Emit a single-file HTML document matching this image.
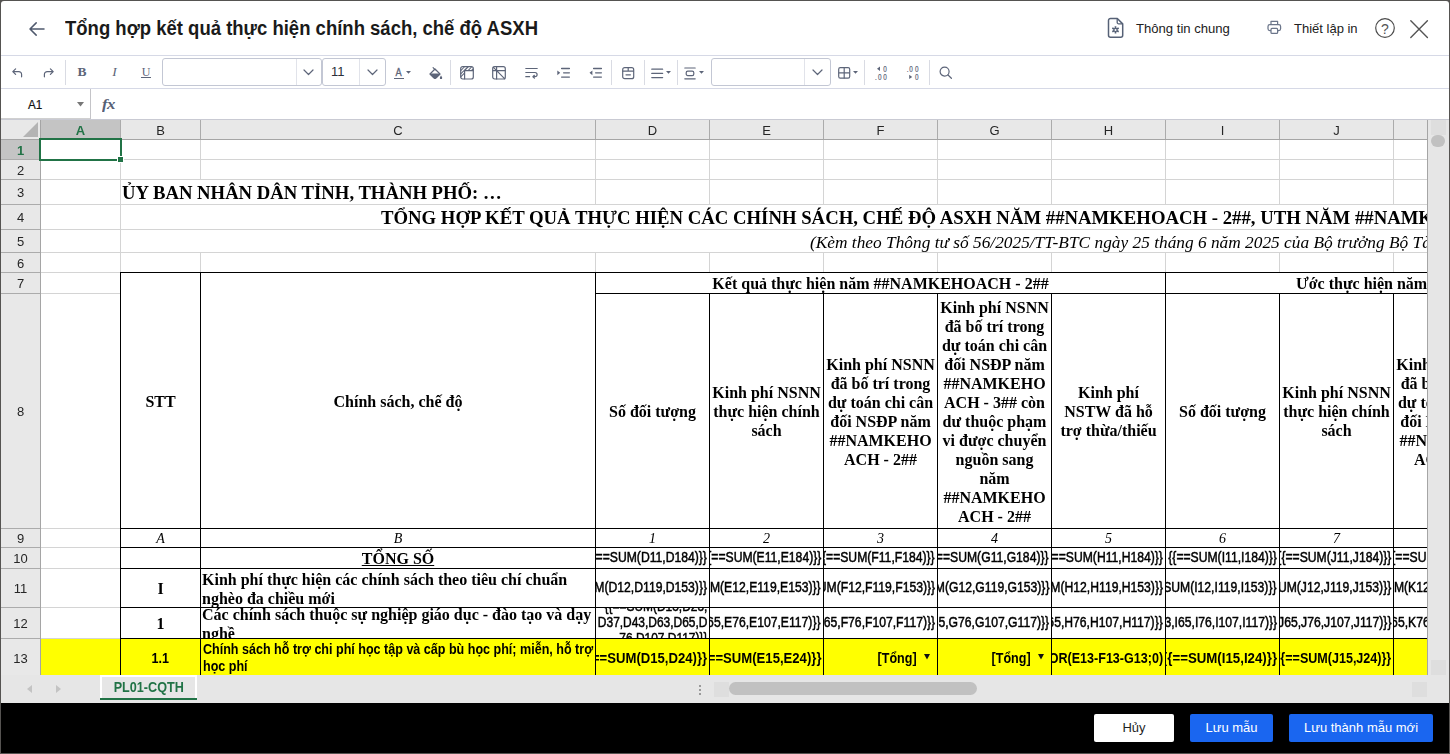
<!DOCTYPE html>
<html lang="vi"><head><meta charset="utf-8"><title>Tổng hợp kết quả thực hiện chính sách, chế độ ASXH</title>
<style>
*{box-sizing:border-box;margin:0;padding:0}
html,body{width:1450px;height:754px;overflow:hidden;background:#000}
body{position:relative;font-family:"Liberation Sans",sans-serif;color:#000}
.abs{position:absolute}
#frame{position:absolute;left:0;top:0;width:1450px;height:754px;background:#555351}
#win{position:absolute;left:1px;top:1px;width:1448px;height:702px;background:#fff;border-radius:3px 3px 0 0;overflow:hidden}
#foot{position:absolute;left:1px;top:703px;width:1448px;height:50px;background:#000}
.hl{position:absolute;height:1px;background:#d4d4d4}
.vl{position:absolute;width:1px;background:#d4d4d4}
.bh{position:absolute;height:1px;background:#000}
.bv{position:absolute;width:1px;background:#000}
.c{position:absolute;overflow:hidden;display:flex;white-space:nowrap}
.ser{font-family:"Liberation Serif",serif}
.b{font-weight:bold}
.i{font-style:italic}
.rh{position:absolute;left:1px;width:39px;text-align:center;font-size:13px;color:#262626;display:flex;align-items:center;justify-content:center;padding-top:1px;padding-right:2px}
.ch{position:absolute;top:0;height:19px;text-align:center;font-size:13px;color:#262626;display:flex;align-items:center;justify-content:center;padding-top:2px}
.hd{font-weight:bold;font-size:16px;line-height:19px;text-align:center;white-space:normal;align-items:center;justify-content:center;font-family:"Liberation Serif",serif}
.hd span{display:block}
.f{justify-content:flex-end;align-items:center;font-size:14.67px}
.f span{display:block;-webkit-text-stroke:.5px #000;transform:scaleX(.83);transform-origin:100% 50%;white-space:nowrap}
.y{justify-content:flex-end;align-items:center;font-size:14.67px;font-weight:bold}
.y span{display:block;transform:scaleX(.856);transform-origin:100% 50%;white-space:nowrap}
.btn{position:absolute;top:714px;height:28px;border-radius:2px;font-size:13px;display:flex;align-items:center;justify-content:center}
.btn span{display:block;white-space:nowrap;position:relative;top:-1px}
.tsep{position:absolute;top:59px;width:1px;height:25px;background:#d9dbe3}
.box{position:absolute;top:58px;height:28px;border:1px solid #c3c7d4;border-radius:3px;background:#fff}
.ic{position:absolute;overflow:visible}
</style></head><body>
<div id="frame"></div><div id="win">
<div class="abs" style="left:-1px;top:54px;width:1450px;height:1px;background:#d6d9e6"></div>
<svg class="ic" style="left:27px;top:19px" width="18" height="18" viewBox="0 0 18 18" fill="none" stroke="#4f596d" stroke-width="1.5" stroke-linecap="round" stroke-linejoin="round"><path d="M16 9H2.2M8.2 2.9L2 9l6.2 6.1"/></svg>
<div class="abs b" style="left:64.4px;top:14px;font-size:20px;line-height:26px;white-space:nowrap;color:#1a1a1a;transform:scaleX(.925);transform-origin:0 50%">Tổng hợp kết quả thực hiện chính sách, chế độ ASXH</div>
<svg class="ic" style="left:1105.9px;top:16.3px" width="17" height="21" viewBox="0 0 17 21" fill="none" stroke="#566176" stroke-width="1.5" stroke-linejoin="round" stroke-linecap="round"><path d="M3.5 1.5h6.8l5.4 5.4v11.4a2 2 0 0 1-2 2H3.5a2 2 0 0 1-2-2V3.5a2 2 0 0 1 2-2z"/><path d="M10.2 1.8v3.6a1.4 1.4 0 0 0 1.4 1.4h3.8" stroke-width="1.3"/><g stroke-width="1.7" stroke-linecap="butt"><path d="M8.5 9.2v7.4M5.3 11.05l6.4 3.7M11.7 11.05l-6.4 3.7"/></g><circle cx="8.5" cy="12.9" r="1.9" fill="#566176" stroke="none"/><circle cx="8.5" cy="12.9" r="1" fill="#fff" stroke="none"/></svg>
<div class="abs" style="left:1135px;top:18.5px;font-size:13.1px;line-height:18px;white-space:nowrap;color:#212121">Thông tin chung</div>
<svg class="ic" style="left:1265.8px;top:18.8px" width="15" height="15" viewBox="0 0 15 15" fill="none" stroke="#6b758a" stroke-width="1.25" stroke-linejoin="round"><path d="M4 4.6V1.4h6.6v3.2"/><rect x="1" y="4.6" width="12.6" height="6" rx="1.8"/><rect x="4" y="8.4" width="6.6" height="5" rx="1" fill="#fff"/></svg>
<div class="abs" style="left:1293px;top:18.5px;font-size:13px;line-height:18px;white-space:nowrap;color:#212121">Thiết lập in</div>
<svg class="ic" style="left:1373px;top:16px" width="22" height="22" viewBox="0 0 22 22" fill="none" stroke="#4c4c4c" stroke-width="1.2"><circle cx="11" cy="11" r="9.3"/></svg>
<div class="abs" style="left:1373px;top:16.5px;width:22px;height:22px;font-size:14px;line-height:22px;text-align:center;color:#555">?</div>
<svg class="ic" style="left:1409px;top:19px" width="18" height="18" viewBox="0 0 18 18" fill="none" stroke="#555" stroke-width="1.4" stroke-linecap="round"><path d="M0.8 0.8l16.6 16.6M17.4 0.8L0.8 17.4"/></svg>
<div class="abs" style="left:-1px;top:87px;width:1450px;height:1px;background:#d6d9e6"></div>
<svg class="ic" style="left:10.5px;top:66.5px" width="11" height="10" viewBox="0 0 11 10" fill="none" stroke="#5d6579" stroke-width="1.2" stroke-linecap="round" stroke-linejoin="round" ><path d="M3.6 0.8L0.8 3.6l2.8 2.8M1.2 3.6h5.6a2.8 2.8 0 0 1 2.8 2.8v2.4"/></svg>
<svg class="ic" style="left:42px;top:66.5px" width="11" height="10" viewBox="0 0 11 10" fill="none" stroke="#5d6579" stroke-width="1.2" stroke-linecap="round" stroke-linejoin="round" ><path d="M7.4 0.8l2.8 2.8-2.8 2.8M9.8 3.6H4.2a2.8 2.8 0 0 0-2.8 2.8v2.4"/></svg>
<div class="tsep" style="left:64px"></div>
<div class="abs ser b" style="left:73px;top:63px;width:16px;text-align:center;font-size:13.5px;line-height:16px;color:#5d6579">B</div>
<div class="abs ser i" style="left:105.5px;top:63px;width:16px;text-align:center;font-size:13.5px;line-height:16px;color:#5d6579">I</div>
<div class="abs ser" style="left:137px;top:63.5px;width:16px;text-align:center;font-size:12px;line-height:14px;color:#5d6579">U</div>
<div class="abs" style="left:140px;top:76px;width:10px;height:1px;background:#5d6579"></div>
<div class="box" style="left:161px;top:57px;width:160px;height:28px;"></div>
<div class="abs" style="left:295px;top:58px;width:1px;height:26px;background:#e1e3ea"></div>
<svg class="ic" style="left:302px;top:68px" width="11" height="7" viewBox="0 0 11 7" fill="none" stroke="#5d6579" stroke-width="1.2" stroke-linecap="round" stroke-linejoin="round" stroke-width="1.4"><path d="M1 1l4.5 4.5L10 1"/></svg>
<div class="box" style="left:321px;top:57px;width:64px;height:28px;"></div>
<div class="abs" style="left:358px;top:58px;width:1px;height:26px;background:#e1e3ea"></div>
<svg class="ic" style="left:366px;top:68px" width="11" height="7" viewBox="0 0 11 7" fill="none" stroke="#5d6579" stroke-width="1.2" stroke-linecap="round" stroke-linejoin="round" stroke-width="1.4"><path d="M1 1l4.5 4.5L10 1"/></svg>
<div class="abs" style="left:330px;top:62px;font-size:13px;line-height:18px;color:#2b2f3a">11</div>
<div class="abs" style="left:391.5px;top:64.5px;width:13px;text-align:center;font-size:10.5px;line-height:12px;color:#5d6579;-webkit-text-stroke:.3px #5d6579"><span style="display:inline-block;transform:scaleX(.88)">A</span></div>
<div class="abs" style="left:393px;top:76.5px;width:10px;height:1px;background:#5d6579"></div>
<svg class="ic" style="left:404.5px;top:70px" width="5" height="3" viewBox="0 0 5 3"><path d="M0 0h5L2.5 2.8z" fill="#5d6579"/></svg>
<svg class="ic" style="left:427.5px;top:65.5px" width="14" height="13" viewBox="0 0 14 13" fill="none" stroke="#5d6579" stroke-width="1.2" stroke-linecap="round" stroke-linejoin="round" ><path d="M1 7L6 2l5 5-3.9 3.9a1.5 1.5 0 0 1-2.2 0z"/><path d="M1.4 7h9.2l-3.5 3.7a1.5 1.5 0 0 1-2.2 0z" fill="#5d6579"/><path d="M4.1 0.7l2.1 2.1"/><path d="M12 8.4c.8 1.1 1.2 1.9 1.2 2.5a1.2 1.2 0 0 1-2.4 0c0-.6.4-1.4 1.2-2.5z" fill="#5d6579" stroke="none"/></svg>
<div class="tsep" style="left:449px"></div>
<svg class="ic" style="left:459px;top:65px" width="14" height="14" viewBox="0 0 14 14" fill="none" stroke="#5d6579" stroke-width="1.2" stroke-linecap="round" stroke-linejoin="round" ><rect x="0.7" y="0.7" width="12.6" height="12.3" rx="2"/><path d="M4.6 4.6v8.2M4.6 4.6h8.4"/><path d="M1 4.3L4.3 1M1 7.6L7.6 1M4.8 4.4L8.2 1M8.3 4.4L11.5 1M1 10.6l3.4-3.4M11.6 4.4l1.4-1.4" stroke-width="1.05"/></svg>
<svg class="ic" style="left:491px;top:65px" width="14" height="14" viewBox="0 0 14 14" fill="none" stroke="#5d6579" stroke-width="1.2" stroke-linecap="round" stroke-linejoin="round" ><rect x="0.7" y="0.7" width="12.6" height="12.3" rx="2"/><path d="M4.6 1v12M1 4.6h12M1.2 1.2l11.6 11.6"/></svg>
<svg class="ic" style="left:523.5px;top:66px" width="14" height="12" viewBox="0 0 14 12" fill="none" stroke="#5d6579" stroke-width="1.2" stroke-linecap="round" stroke-linejoin="round" ><path d="M0.8 1.5h11.4M0.8 5.5h9.2a2.1 2.1 0 0 1 0 4.2H8.2M0.8 9.7h3.8M9.4 8.3L7.9 9.7l1.5 1.4"/></svg>
<svg class="ic" style="left:555.5px;top:66px" width="14" height="12" viewBox="0 0 14 12" fill="none" stroke="#5d6579" stroke-width="1.2" stroke-linecap="round" stroke-linejoin="round" ><path d="M4.6 1.5h7.8M6.6 5.8h5.8M4.6 10.1h7.8" stroke-width="1.3"/><path d="M0.3 3.4L3.2 5.8 0.3 8.2z" fill="#5d6579" stroke="none"/></svg>
<svg class="ic" style="left:587.5px;top:66px" width="14" height="12" viewBox="0 0 14 12" fill="none" stroke="#5d6579" stroke-width="1.2" stroke-linecap="round" stroke-linejoin="round" ><path d="M4.6 1.5h7.8M6.6 5.8h5.8M4.6 10.1h7.8" stroke-width="1.3"/><path d="M3.4 3.4L0.5 5.8 3.4 8.2z" fill="#5d6579" stroke="none"/></svg>
<div class="tsep" style="left:610px"></div>
<svg class="ic" style="left:621px;top:66px" width="13" height="13" viewBox="0 0 13 13" fill="none" stroke="#5d6579" stroke-width="1.2" stroke-linecap="round" stroke-linejoin="round" ><rect x="0.7" y="0.7" width="11" height="11" rx="2"/><path d="M1 4.2h10.4M6.2 1v3M4 7.8h4.4"/></svg>
<div class="tsep" style="left:643px"></div>
<svg class="ic" style="left:650px;top:66.5px" width="13" height="11" viewBox="0 0 13 11" fill="none" stroke="#5d6579" stroke-width="1.2" stroke-linecap="round" stroke-linejoin="round" ><path d="M0.8 1.2h10.8M0.8 5.4h10.8M0.8 9.6h10.8" stroke-width="1.3"/></svg>
<svg class="ic" style="left:664.5px;top:69.5px" width="5" height="3" viewBox="0 0 5 3"><path d="M0 0h5L2.5 2.8z" fill="#5d6579"/></svg>
<div class="tsep" style="left:676px"></div>
<svg class="ic" style="left:683px;top:65.5px" width="12" height="13" viewBox="0 0 12 13" fill="none" stroke="#5d6579" stroke-width="1.2" stroke-linecap="round" stroke-linejoin="round" ><path d="M0.8 1h10.4M0.8 11.8h10.4"/><rect x="2.2" y="4.2" width="7.6" height="4.4" rx="1.6"/></svg>
<svg class="ic" style="left:697.5px;top:69.5px" width="5" height="3" viewBox="0 0 5 3"><path d="M0 0h5L2.5 2.8z" fill="#5d6579"/></svg>
<div class="box" style="left:710px;top:57px;width:120px;height:28px;"></div>
<div class="abs" style="left:803px;top:58px;width:1px;height:26px;background:#e1e3ea"></div>
<svg class="ic" style="left:811px;top:68px" width="11" height="7" viewBox="0 0 11 7" fill="none" stroke="#5d6579" stroke-width="1.2" stroke-linecap="round" stroke-linejoin="round" stroke-width="1.4"><path d="M1 1l4.5 4.5L10 1"/></svg>
<svg class="ic" style="left:836.5px;top:66px" width="13" height="12" viewBox="0 0 13 12" fill="none" stroke="#5d6579" stroke-width="1.2" stroke-linecap="round" stroke-linejoin="round" ><rect x="0.7" y="0.7" width="11" height="10.4" rx="1.6"/><path d="M6.2 1v10M1 5.9h10.4"/></svg>
<svg class="ic" style="left:851.5px;top:69.5px" width="5" height="3" viewBox="0 0 5 3"><path d="M0 0h5L2.5 2.8z" fill="#5d6579"/></svg>
<div class="tsep" style="left:863px"></div>
<svg class="ic" style="left:873px;top:64px" width="15" height="16" viewBox="0 0 15 16"><path d="M6 1.6v4.4L3 3.8z" fill="#5d6579"/><text transform="translate(9.2 6.9) scale(.76 1)" font-family="Liberation Sans, sans-serif" font-size="8.4" fill="#5d6579" stroke="#5d6579" stroke-width=".2">0</text><text transform="translate(1 14.8) scale(.76 1)" font-family="Liberation Sans, sans-serif" font-size="8.4" fill="#5d6579" stroke="#5d6579" stroke-width=".2">.</text><text transform="translate(4.1 14.8) scale(.76 1)" font-family="Liberation Sans, sans-serif" font-size="8.4" fill="#5d6579" stroke="#5d6579" stroke-width=".2">0</text><text transform="translate(9.2 14.8) scale(.76 1)" font-family="Liberation Sans, sans-serif" font-size="8.4" fill="#5d6579" stroke="#5d6579" stroke-width=".2">0</text></svg>
<svg class="ic" style="left:905px;top:64px" width="15" height="16" viewBox="0 0 15 16"><text transform="translate(0.8 6.9) scale(.76 1)" font-family="Liberation Sans, sans-serif" font-size="8.4" fill="#5d6579" stroke="#5d6579" stroke-width=".2">.</text><text transform="translate(3.3 6.9) scale(.76 1)" font-family="Liberation Sans, sans-serif" font-size="8.4" fill="#5d6579" stroke="#5d6579" stroke-width=".2">0</text><text transform="translate(9.1 6.9) scale(.76 1)" font-family="Liberation Sans, sans-serif" font-size="8.4" fill="#5d6579" stroke="#5d6579" stroke-width=".2">0</text><path d="M3.2 9.7v4.4L6.2 11.9z" fill="#5d6579"/><text transform="translate(9.1 14.8) scale(.76 1)" font-family="Liberation Sans, sans-serif" font-size="8.4" fill="#5d6579" stroke="#5d6579" stroke-width=".2">0</text></svg>
<div class="tsep" style="left:928px"></div>
<svg class="ic" style="left:938px;top:65px" width="14" height="13" viewBox="0 0 14 13" fill="none" stroke="#5d6579" stroke-width="1.2" stroke-linecap="round" stroke-linejoin="round" ><circle cx="5.6" cy="5.6" r="4.5"/><path d="M9 9l3.4 3.3"/></svg>
<div class="abs" style="left:89px;top:88px;width:1px;height:30px;background:#c4c4c8"></div>
<div class="abs" style="left:-1px;top:117px;width:90px;height:1px;background:#d0d0d0"></div>
<div class="abs" style="left:27px;top:95px;font-size:13px;line-height:18px;color:#111;transform:scaleX(.9);transform-origin:0 50%;-webkit-text-stroke:.2px #111">A1</div>
<svg class="ic" style="left:76px;top:101px" width="7" height="5" viewBox="0 0 7 5"><path d="M0 0h7L3.5 4.6z" fill="#777"/></svg>
<div class="abs ser i" style="left:101px;top:92.8px;font-size:15px;line-height:20px;color:#566075;letter-spacing:-.5px;font-weight:bold;transform:scaleX(1.12);transform-origin:0 50%">fx</div>
<div class="abs" style="left:-1px;top:118px;width:1450px;height:1px;background:#c9cad3"></div>
<div class="abs" id="grid" style="will-change:transform;left:0px;top:119px;width:1427px;height:555px;overflow:hidden;background:#fff">
<div class="abs" style="left:-1px;top:0px;width:1428px;height:20px;background:#e8e8e8"></div>
<div class="abs" style="left:-1px;top:19px;width:1428px;height:1px;background:#a5a5a5"></div>
<div class="abs" style="left:-1px;top:20px;width:41px;height:540px;background:#e8e8e8"></div>
<div class="abs" style="left:39px;top:0px;width:1px;height:560px;background:#a5a5a5"></div>
<div class="abs" style="left:40px;top:0px;width:80px;height:19px;background:#c4c4c4"></div>
<div class="abs" style="left:0px;top:20px;width:39px;height:20px;background:#c4c4c4"></div>
<svg class="ic" style="left:22px;top:2px" width="15" height="15" viewBox="0 0 15 15"><path d="M15 0v15H0z" fill="#b4b4b4"/></svg>
<div class="abs" style="left:119px;top:0px;width:1px;height:19px;background:#ababab"></div>
<div class="abs" style="left:199px;top:0px;width:1px;height:19px;background:#ababab"></div>
<div class="abs" style="left:594px;top:0px;width:1px;height:19px;background:#ababab"></div>
<div class="abs" style="left:708px;top:0px;width:1px;height:19px;background:#ababab"></div>
<div class="abs" style="left:822px;top:0px;width:1px;height:19px;background:#ababab"></div>
<div class="abs" style="left:936px;top:0px;width:1px;height:19px;background:#ababab"></div>
<div class="abs" style="left:1050px;top:0px;width:1px;height:19px;background:#ababab"></div>
<div class="abs" style="left:1164px;top:0px;width:1px;height:19px;background:#ababab"></div>
<div class="abs" style="left:1278px;top:0px;width:1px;height:19px;background:#ababab"></div>
<div class="abs" style="left:1392px;top:0px;width:1px;height:19px;background:#ababab"></div>
<div class="ch" style="left:40px;width:79px;color:#217346;font-weight:bold;">A</div>
<div class="ch" style="left:120px;width:79px;">B</div>
<div class="ch" style="left:200px;width:394px;">C</div>
<div class="ch" style="left:595px;width:113px;">D</div>
<div class="ch" style="left:709px;width:113px;">E</div>
<div class="ch" style="left:823px;width:113px;">F</div>
<div class="ch" style="left:937px;width:113px;">G</div>
<div class="ch" style="left:1051px;width:113px;">H</div>
<div class="ch" style="left:1165px;width:113px;">I</div>
<div class="ch" style="left:1279px;width:113px;">J</div>
<div class="ch" style="left:1393px;width:113px;">K</div>
<div class="abs" style="left:0px;top:39px;width:39px;height:1px;background:#ababab"></div>
<div class="rh" style="top:20px;height:19px;color:#217346;font-weight:bold;">1</div>
<div class="abs" style="left:0px;top:59px;width:39px;height:1px;background:#ababab"></div>
<div class="rh" style="top:40px;height:19px;">2</div>
<div class="abs" style="left:0px;top:84px;width:39px;height:1px;background:#ababab"></div>
<div class="rh" style="top:60px;height:24px;">3</div>
<div class="abs" style="left:0px;top:109px;width:39px;height:1px;background:#ababab"></div>
<div class="rh" style="top:85px;height:24px;">4</div>
<div class="abs" style="left:0px;top:132px;width:39px;height:1px;background:#ababab"></div>
<div class="rh" style="top:110px;height:22px;">5</div>
<div class="abs" style="left:0px;top:152px;width:39px;height:1px;background:#ababab"></div>
<div class="rh" style="top:133px;height:19px;">6</div>
<div class="abs" style="left:0px;top:173px;width:39px;height:1px;background:#ababab"></div>
<div class="rh" style="top:153px;height:20px;">7</div>
<div class="abs" style="left:0px;top:408px;width:39px;height:1px;background:#ababab"></div>
<div class="rh" style="top:174px;height:234px;">8</div>
<div class="abs" style="left:0px;top:427px;width:39px;height:1px;background:#ababab"></div>
<div class="rh" style="top:409px;height:18px;">9</div>
<div class="abs" style="left:0px;top:448px;width:39px;height:1px;background:#ababab"></div>
<div class="rh" style="top:428px;height:20px;">10</div>
<div class="abs" style="left:0px;top:487px;width:39px;height:1px;background:#ababab"></div>
<div class="rh" style="top:449px;height:38px;">11</div>
<div class="abs" style="left:0px;top:518px;width:39px;height:1px;background:#ababab"></div>
<div class="rh" style="top:488px;height:30px;">12</div>
<div class="abs" style="left:0px;top:556px;width:39px;height:1px;background:#ababab"></div>
<div class="rh" style="top:519px;height:37px;">13</div>
<div class="hl" style="left:40px;top:39px;width:1387px;height:1px;"></div>
<div class="hl" style="left:40px;top:59px;width:1387px;height:1px;"></div>
<div class="hl" style="left:40px;top:84px;width:1387px;height:1px;"></div>
<div class="hl" style="left:40px;top:109px;width:1387px;height:1px;"></div>
<div class="hl" style="left:40px;top:132px;width:1387px;height:1px;"></div>
<div class="hl" style="left:40px;top:152px;width:80px;height:1px;"></div>
<div class="hl" style="left:40px;top:173px;width:80px;height:1px;"></div>
<div class="hl" style="left:40px;top:408px;width:80px;height:1px;"></div>
<div class="hl" style="left:40px;top:427px;width:80px;height:1px;"></div>
<div class="hl" style="left:40px;top:448px;width:80px;height:1px;"></div>
<div class="hl" style="left:40px;top:487px;width:80px;height:1px;"></div>
<div class="hl" style="left:40px;top:518px;width:80px;height:1px;"></div>
<div class="vl" style="left:119px;top:20px;width:1px;height:133px;"></div>
<div class="vl" style="left:199px;top:20px;width:1px;height:40px;"></div>
<div class="vl" style="left:199px;top:133px;width:1px;height:20px;"></div>
<div class="vl" style="left:594px;top:20px;width:1px;height:65px;"></div>
<div class="vl" style="left:594px;top:133px;width:1px;height:20px;"></div>
<div class="vl" style="left:708px;top:20px;width:1px;height:65px;"></div>
<div class="vl" style="left:708px;top:133px;width:1px;height:20px;"></div>
<div class="vl" style="left:822px;top:20px;width:1px;height:65px;"></div>
<div class="vl" style="left:822px;top:133px;width:1px;height:20px;"></div>
<div class="vl" style="left:936px;top:20px;width:1px;height:65px;"></div>
<div class="vl" style="left:936px;top:133px;width:1px;height:20px;"></div>
<div class="vl" style="left:1050px;top:20px;width:1px;height:65px;"></div>
<div class="vl" style="left:1050px;top:133px;width:1px;height:20px;"></div>
<div class="vl" style="left:1164px;top:20px;width:1px;height:65px;"></div>
<div class="vl" style="left:1164px;top:133px;width:1px;height:20px;"></div>
<div class="vl" style="left:1278px;top:20px;width:1px;height:65px;"></div>
<div class="vl" style="left:1278px;top:133px;width:1px;height:20px;"></div>
<div class="vl" style="left:1392px;top:20px;width:1px;height:65px;"></div>
<div class="vl" style="left:1392px;top:133px;width:1px;height:20px;"></div>
<div class="abs" style="left:40px;top:519px;width:1387px;height:40px;background:#ffff00"></div>
<div class="bh" style="left:119px;top:152px;width:1310px;height:1px;"></div>
<div class="bh" style="left:594px;top:173px;width:840px;height:1px;"></div>
<div class="bh" style="left:119px;top:408px;width:1310px;height:1px;"></div>
<div class="bh" style="left:119px;top:427px;width:1310px;height:1px;"></div>
<div class="bh" style="left:119px;top:448px;width:1310px;height:1px;"></div>
<div class="bh" style="left:119px;top:487px;width:1310px;height:1px;"></div>
<div class="bh" style="left:119px;top:518px;width:1310px;height:1px;"></div>
<div class="bv" style="left:119px;top:152px;width:1px;height:410px;"></div>
<div class="bv" style="left:199px;top:152px;width:1px;height:410px;"></div>
<div class="bv" style="left:594px;top:152px;width:1px;height:410px;"></div>
<div class="bv" style="left:1164px;top:152px;width:1px;height:410px;"></div>
<div class="bv" style="left:708px;top:173px;width:1px;height:390px;"></div>
<div class="bv" style="left:822px;top:173px;width:1px;height:390px;"></div>
<div class="bv" style="left:936px;top:173px;width:1px;height:390px;"></div>
<div class="bv" style="left:1050px;top:173px;width:1px;height:390px;"></div>
<div class="bv" style="left:1278px;top:173px;width:1px;height:390px;"></div>
<div class="bv" style="left:1392px;top:173px;width:1px;height:390px;"></div>
<div class="c ser b" style="left:120px;top:60px;width:1307px;height:24px;font-size:18.7px;line-height:22px;align-items:flex-end;padding-left:1px;padding-bottom:0"><span>ỦY BAN NHÂN DÂN TỈNH, THÀNH PHỐ: …</span></div>
<div class="c ser b" style="left:120px;top:85px;width:1307px;height:24px;font-size:18.74px;line-height:22px;align-items:flex-end;padding-left:260px;padding-bottom:0"><span>TỔNG HỢP KẾT QUẢ THỰC HIỆN CÁC CHÍNH SÁCH, CHẾ ĐỘ ASXH NĂM ##NAMKEHOACH - 2##, UTH NĂM ##NAMKEHOACH - 1##, DỰ TOÁN NĂM ##NAMKEHOACH##</span></div>
<div class="c ser i" style="left:120px;top:111px;width:1307px;height:22px;font-size:17.33px;line-height:20px;align-items:flex-end;padding-left:689px;padding-bottom:0px"><span>(Kèm theo Thông tư số 56/2025/TT-BTC ngày 25 tháng 6 năm 2025 của Bộ trưởng Bộ Tài chính)</span></div>
<div class="c hd" style="left:595px;top:153px;width:569px;height:20px;white-space:nowrap;align-items:flex-start;padding-top:1px"><span>Kết quả thực hiện năm ##NAMKEHOACH - 2##</span></div>
<div class="c hd" style="left:1165px;top:153px;width:262px;height:20px;white-space:nowrap;justify-content:flex-start;align-items:flex-start;padding-left:130px;padding-top:1px"><span>Ước thực hiện năm ##NAMKEHOACH - 1##</span></div>
<div class="c hd" style="left:120px;top:153px;width:79px;height:255px;padding-top:1px"><span>STT</span></div>
<div class="c hd" style="left:200px;top:153px;width:394px;height:255px;padding-top:1px"><span>Chính sách, chế độ</span></div>
<div class="c hd" style="left:595px;top:174px;width:113px;height:234px;padding:1px 2px 0 2px"><span>Số đối tượng</span></div>
<div class="c hd" style="left:709px;top:174px;width:113px;height:234px;padding:1px 2px 0 2px"><span>Kinh phí NSNN thực hiện chính sách</span></div>
<div class="c hd" style="left:823px;top:174px;width:113px;height:234px;padding:1px 2px 0 2px"><span>Kinh phí NSNN đã bố trí trong dự toán chi cân đối NSĐP năm ##NAMKEHO ACH - 2##</span></div>
<div class="c hd" style="left:937px;top:174px;width:113px;height:234px;padding:1px 2px 0 2px"><span>Kinh phí NSNN đã bố trí trong dự toán chi cân đối NSĐP năm ##NAMKEHO ACH - 3## còn dư thuộc phạm vi được chuyển nguồn sang năm ##NAMKEHO ACH - 2##</span></div>
<div class="c hd" style="left:1051px;top:174px;width:113px;height:234px;padding:1px 2px 0 2px"><span>Kinh phí NSTW đã hỗ trợ thừa/thiếu</span></div>
<div class="c hd" style="left:1165px;top:174px;width:113px;height:234px;padding:1px 2px 0 2px"><span>Số đối tượng</span></div>
<div class="c hd" style="left:1279px;top:174px;width:113px;height:234px;padding:1px 2px 0 2px"><span>Kinh phí NSNN thực hiện chính sách</span></div>
<div class="c hd" style="left:1393px;top:174px;width:113px;height:234px;padding:1px 2px 0 2px"><span>Kinh phí NSNN đã bố trí trong dự toán chi cân đối NSĐP năm ##NAMKEHO ACH - 1##</span></div>
<div class="c ser i" style="left:120px;top:409px;width:79px;height:18px;font-size:14px;justify-content:center;align-items:center;padding-top:1px"><span>A</span></div>
<div class="c ser i" style="left:200px;top:409px;width:394px;height:18px;font-size:14px;justify-content:center;align-items:center;padding-top:1px"><span>B</span></div>
<div class="c ser i" style="left:595px;top:409px;width:113px;height:18px;font-size:14px;justify-content:center;align-items:center;padding-top:1px"><span>1</span></div>
<div class="c ser i" style="left:709px;top:409px;width:113px;height:18px;font-size:14px;justify-content:center;align-items:center;padding-top:1px"><span>2</span></div>
<div class="c ser i" style="left:823px;top:409px;width:113px;height:18px;font-size:14px;justify-content:center;align-items:center;padding-top:1px"><span>3</span></div>
<div class="c ser i" style="left:937px;top:409px;width:113px;height:18px;font-size:14px;justify-content:center;align-items:center;padding-top:1px"><span>4</span></div>
<div class="c ser i" style="left:1051px;top:409px;width:113px;height:18px;font-size:14px;justify-content:center;align-items:center;padding-top:1px"><span>5</span></div>
<div class="c ser i" style="left:1165px;top:409px;width:113px;height:18px;font-size:14px;justify-content:center;align-items:center;padding-top:1px"><span>6</span></div>
<div class="c ser i" style="left:1279px;top:409px;width:113px;height:18px;font-size:14px;justify-content:center;align-items:center;padding-top:1px"><span>7</span></div>
<div class="c ser i" style="left:1393px;top:409px;width:113px;height:18px;font-size:14px;justify-content:center;align-items:center;padding-top:1px"><span>8</span></div>
<div class="c ser b" style="left:200px;top:428px;width:394px;height:20px;font-size:16px;justify-content:center;align-items:center;padding-top:2px"><span style="text-decoration:underline">TỔNG SỐ</span></div>
<div class="c f" style="left:595px;top:428px;width:113px;height:20px;padding-right:2px;padding-bottom:1.6px"><span>{{==SUM(D11,D184)}}</span></div>
<div class="c f" style="left:709px;top:428px;width:113px;height:20px;padding-right:2px;padding-bottom:1.6px"><span>{{==SUM(E11,E184)}}</span></div>
<div class="c f" style="left:823px;top:428px;width:113px;height:20px;padding-right:2px;padding-bottom:1.6px"><span>{{==SUM(F11,F184)}}</span></div>
<div class="c f" style="left:937px;top:428px;width:113px;height:20px;padding-right:2px;padding-bottom:1.6px"><span>{{==SUM(G11,G184)}}</span></div>
<div class="c f" style="left:1051px;top:428px;width:113px;height:20px;padding-right:2px;padding-bottom:1.6px"><span>{{==SUM(H11,H184)}}</span></div>
<div class="c f" style="left:1165px;top:428px;width:113px;height:20px;padding-right:2px;padding-bottom:1.6px"><span>{{==SUM(I11,I184)}}</span></div>
<div class="c f" style="left:1279px;top:428px;width:113px;height:20px;padding-right:2px;padding-bottom:1.6px"><span>{{==SUM(J11,J184)}}</span></div>
<div class="c f" style="left:1393px;top:428px;width:113px;height:20px;padding-right:2px;padding-bottom:1.6px"><span>{{==SUM(K11,K184)}}</span></div>
<div class="c ser b" style="left:120px;top:449px;width:79px;height:38px;font-size:16px;justify-content:center;align-items:center;padding-top:2px"><span>I</span></div>
<div class="c ser b" style="left:200px;top:449px;width:394px;height:38px;font-size:16px;line-height:19px;align-items:center;padding-left:1px;padding-top:1px"><span>Kinh phí thực hiện các chính sách theo tiêu chí chuẩn<br>nghèo đa chiều mới</span></div>
<div class="c f" style="left:595px;top:449px;width:113px;height:38px;padding-right:2px;padding-bottom:1.6px"><span>{{==SUM(D12,D119,D153)}}</span></div>
<div class="c f" style="left:709px;top:449px;width:113px;height:38px;padding-right:2px;padding-bottom:1.6px"><span>{{==SUM(E12,E119,E153)}}</span></div>
<div class="c f" style="left:823px;top:449px;width:113px;height:38px;padding-right:2px;padding-bottom:1.6px"><span>{{==SUM(F12,F119,F153)}}</span></div>
<div class="c f" style="left:937px;top:449px;width:113px;height:38px;padding-right:2px;padding-bottom:1.6px"><span>{{==SUM(G12,G119,G153)}}</span></div>
<div class="c f" style="left:1051px;top:449px;width:113px;height:38px;padding-right:2px;padding-bottom:1.6px"><span>{{==SUM(H12,H119,H153)}}</span></div>
<div class="c f" style="left:1165px;top:449px;width:113px;height:38px;padding-right:2px;padding-bottom:1.6px"><span>{{==SUM(I12,I119,I153)}}</span></div>
<div class="c f" style="left:1279px;top:449px;width:113px;height:38px;padding-right:2px;padding-bottom:1.6px"><span>{{==SUM(J12,J119,J153)}}</span></div>
<div class="c f" style="left:1393px;top:449px;width:113px;height:38px;padding-right:2px;padding-bottom:1.6px"><span>{{==SUM(K12,K119,K153)}}</span></div>
<div class="c ser b" style="left:120px;top:488px;width:79px;height:30px;font-size:16px;justify-content:center;align-items:center;padding-top:2px"><span>1</span></div>
<div class="c ser b" style="left:200px;top:488px;width:394px;height:30px;font-size:16px;line-height:19px;align-items:center;padding-left:1px;padding-top:2px"><span>Các chính sách thuộc sự nghiệp giáo dục - đào tạo và dạy<br>nghề</span></div>
<div class="c f" style="left:595px;top:488px;width:113px;height:30px;padding-right:2px;padding-bottom:1.6px"><span style="transform:scaleX(.815);text-align:right;line-height:16px">{{==SUM(D15,D25,<br>D37,D43,D63,D65,D<br>76,D107,D117)}}</span></div>
<div class="c f" style="left:709px;top:488px;width:113px;height:30px;padding-right:2px;padding-bottom:1.6px"><span>{{==SUM(E15,E25,E37,E43,E63,E65,E76,E107,E117)}}</span></div>
<div class="c f" style="left:823px;top:488px;width:113px;height:30px;padding-right:2px;padding-bottom:1.6px"><span>{{==SUM(F15,F25,F37,F43,F63,F65,F76,F107,F117)}}</span></div>
<div class="c f" style="left:937px;top:488px;width:113px;height:30px;padding-right:2px;padding-bottom:1.6px"><span>{{==SUM(G15,G25,G37,G43,G63,G65,G76,G107,G117)}}</span></div>
<div class="c f" style="left:1051px;top:488px;width:113px;height:30px;padding-right:2px;padding-bottom:1.6px"><span>{{==SUM(H15,H25,H37,H43,H63,H65,H76,H107,H117)}}</span></div>
<div class="c f" style="left:1165px;top:488px;width:113px;height:30px;padding-right:2px;padding-bottom:1.6px"><span>{{==SUM(I15,I25,I37,I43,I63,I65,I76,I107,I117)}}</span></div>
<div class="c f" style="left:1279px;top:488px;width:113px;height:30px;padding-right:2px;padding-bottom:1.6px"><span>{{==SUM(J15,J25,J37,J43,J63,J65,J76,J107,J117)}}</span></div>
<div class="c f" style="left:1393px;top:488px;width:113px;height:30px;padding-right:2px;padding-bottom:1.6px"><span>{{==SUM(K15,K25,K37,K43,K63,K65,K76,K107,K117)}}</span></div>
<div class="c y" style="left:120px;top:519px;width:79px;height:36px;justify-content:center;padding-top:1px"><span style="transform-origin:50% 50%">1.1</span></div>
<div class="c y" style="left:200px;top:519px;width:394px;height:36px;justify-content:flex-start;padding-left:2px;padding-top:1px"><span style="transform-origin:0 50%;line-height:16.3px">Chính sách hỗ trợ chi phí học tập và cấp bù học phí; miễn, hỗ trợ<br>học phí</span></div>
<div class="c y" style="left:595px;top:519px;width:113px;height:36px;padding-right:2px;padding-top:1px"><span style="transform:scaleX(.895)">{{==SUM(D15,D24)}}</span></div>
<div class="c y" style="left:709px;top:519px;width:113px;height:36px;padding-right:2px;padding-top:1px"><span style="transform:scaleX(.895)">{{==SUM(E15,E24)}}</span></div>
<div class="c y" style="left:823px;top:519px;width:113px;height:36px;padding-right:20px;padding-top:1px"><span>[Tổng]</span></div>
<svg class="ic" style="left:923px;top:533.5px" width="6" height="6" viewBox="0 0 6 6"><path d="M0 0h6L3 5.6z" fill="#111"/></svg>
<div class="c y" style="left:937px;top:519px;width:113px;height:36px;padding-right:20px;padding-top:1px"><span>[Tổng]</span></div>
<svg class="ic" style="left:1037px;top:533.5px" width="6" height="6" viewBox="0 0 6 6"><path d="M0 0h6L3 5.6z" fill="#111"/></svg>
<div class="c y" style="left:1051px;top:519px;width:113px;height:36px;padding-right:2px;padding-top:1px"><span>{{==IFERROR(E13-F13-G13;0)</span></div>
<div class="c y" style="left:1165px;top:519px;width:113px;height:36px;padding-right:2px;padding-top:1px"><span style="transform:scaleX(.905)">{{==SUM(I15,I24)}}</span></div>
<div class="c y" style="left:1279px;top:519px;width:113px;height:36px;padding-right:2px;padding-top:1px"><span>{{==SUM(J15,J24)}}</span></div>
<div class="abs" style="left:38px;top:18px;width:83px;height:23px;border:2px solid #217346"></div>
<div class="abs" style="left:116px;top:36px;width:7px;height:7px;background:#fff"></div>
<div class="abs" style="left:117px;top:37px;width:5px;height:5px;background:#217346"></div>
<div class="abs" style="left:1426px;top:0px;width:1px;height:560px;background:#a5a5a5"></div>
</div>
<div class="abs" style="left:1427px;top:119px;width:21px;height:556px;background:#e6e6e6"></div>
<div class="abs" style="left:1430px;top:119px;width:15px;height:15px;background:#dedede"></div>
<div class="abs" style="left:1430px;top:134px;width:14px;height:12px;background:#c1c1c1;border-radius:6px"></div>
<div class="abs" style="left:1430px;top:659px;width:15px;height:15px;background:#dedede"></div>
<div class="abs" style="left:-1px;top:674px;width:1450px;height:28px;background:#e6e6e6"></div>
<svg class="ic" style="left:26px;top:684px" width="5" height="8" viewBox="0 0 5 8"><path d="M5 0v8L0 4z" fill="#c3c3c3"/></svg>
<svg class="ic" style="left:55px;top:684px" width="5" height="8" viewBox="0 0 5 8"><path d="M0 0v8l5-4z" fill="#c3c3c3"/></svg>
<div class="abs" style="left:99px;top:674px;width:97px;height:23px;background:#e6e6e6;border:2px solid #fff;border-bottom:0"></div>
<div class="abs" style="left:99px;top:697px;width:97px;height:2px;background:#217346"></div>
<div class="abs b" style="will-change:transform;left:99px;top:678px;width:97px;text-align:center;font-size:15.4px;line-height:16px;color:#217346"><span style="display:inline-block;transform:scaleX(.82)">PL01-CQTH</span></div>
<div class="abs" style="left:698px;top:684px;width:2px;height:2px;background:#9a9a9a"></div>
<div class="abs" style="left:698px;top:688px;width:2px;height:2px;background:#9a9a9a"></div>
<div class="abs" style="left:698px;top:692px;width:2px;height:2px;background:#9a9a9a"></div>
<div class="abs" style="left:713px;top:681px;width:15px;height:15px;background:#dedede"></div>
<div class="abs" style="left:728px;top:681px;width:248px;height:13px;background:#c1c1c1;border-radius:6.5px"></div>
<div class="abs" style="left:1411px;top:681px;width:15px;height:15px;background:#dedede"></div>
</div>
<div id="foot"></div>
<div class="btn" style="left:1094px;width:80px;background:#fff;color:#1f1f1f"><span>Hủy</span></div>
<div class="btn" style="left:1190px;width:83px;background:#1a66f0;color:#fff"><span>Lưu mẫu</span></div>
<div class="btn" style="left:1289px;width:144px;background:#1a66f0;color:#fff"><span>Lưu thành mẫu mới</span></div>
</body></html>
